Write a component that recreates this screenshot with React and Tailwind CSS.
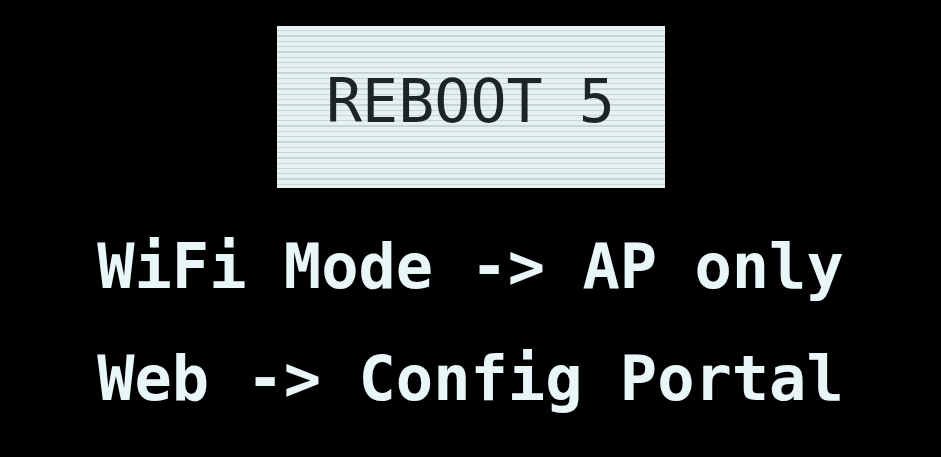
import React from "react";

// OLED status screen: inverted title box + two white status lines
export default function App() {
  return (
    <div className="w-full h-[457px] bg-black flex flex-col items-center overflow-hidden font-['DejaVu_Sans_Mono',monospace]">
      {/* Title box */}
      <div className="mt-[26px] w-[388px] h-[162px] flex items-center justify-center bg-[repeating-linear-gradient(to_bottom,#e6f2f2_0px,#e6f2f2_4px,#c8d5d6_4px,#c8d5d6_5.3px)]">
        <span className="mb-[12px] text-[60px] leading-none text-[#1b2526] whitespace-pre">
          REBOOT 5
        </span>
      </div>

      {/* Status lines */}
      <div className="mt-[48px] flex flex-col gap-[50px] text-[62px] leading-[62px] font-bold text-[#e9f6f8] whitespace-pre">
        <div>WiFi Mode -&gt; AP only</div>
        <div>Web -&gt; Config Portal</div>
      </div>
    </div>
  );
}
